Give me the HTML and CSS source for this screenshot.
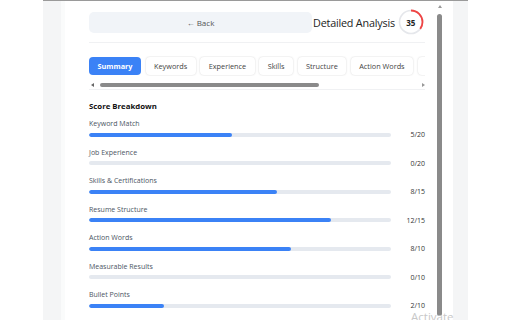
FILE: index.html
```
<!DOCTYPE html>
<html>
<head>
<meta charset="utf-8">
<link rel="stylesheet" href="styles.css">
</head>
<body>
<div class="frame">
  <div class="gutter"></div>
  <div class="gutter-light"></div>
  <div class="main">
    <div class="content">
      <div class="header">
        <div class="back">← Back</div>
        <div class="title">Detailed Analysis</div>
        <div class="score">
          <svg width="26" height="26" viewBox="0 0 26 26">
            <circle cx="13" cy="13" r="11.5" fill="none" stroke="#e5e7eb" stroke-width="1.6"/>
            <circle cx="13" cy="13" r="11.5" fill="none" stroke="#ef4444" stroke-width="1.8" stroke-dasharray="25.3 100" transform="rotate(-90 13 13)"/>
          </svg>
          <span class="score-num">35</span>
        </div>
      </div>
      <div class="tabs-wrap">
        <div class="tabs">
          <div class="tab active">Summary</div>
          <div class="tab">Keywords</div>
          <div class="tab">Experience</div>
          <div class="tab">Skills</div>
          <div class="tab">Structure</div>
          <div class="tab">Action Words</div>
          <div class="tab tab-more"></div>
        </div>
        <div class="hscroll">
          <span class="arrow-l"></span>
          <div class="htrack"><div class="hthumb"></div></div>
          <span class="arrow-r"></span>
        </div>
      </div>
      <div class="section-title">Score Breakdown</div>
      <div class="rows">
        <div class="row"><div class="label">Keyword Match</div><div class="line"><div class="bar"><div class="fill" style="width:47.4%"></div></div><div class="val">5/20</div></div></div>
        <div class="row"><div class="label">Job Experience</div><div class="line"><div class="bar"><div class="fill" style="width:0%"></div></div><div class="val">0/20</div></div></div>
        <div class="row"><div class="label">Skills &amp; Certifications</div><div class="line"><div class="bar"><div class="fill" style="width:62.3%"></div></div><div class="val">8/15</div></div></div>
        <div class="row"><div class="label">Resume Structure</div><div class="line"><div class="bar"><div class="fill" style="width:80.1%"></div></div><div class="val">12/15</div></div></div>
        <div class="row"><div class="label">Action Words</div><div class="line"><div class="bar"><div class="fill" style="width:66.9%"></div></div><div class="val">8/10</div></div></div>
        <div class="row"><div class="label">Measurable Results</div><div class="line"><div class="bar"><div class="fill" style="width:0%"></div></div><div class="val">0/10</div></div></div>
        <div class="row"><div class="label">Bullet Points</div><div class="line"><div class="bar"><div class="fill" style="width:24.8%"></div></div><div class="val">2/10</div></div></div>
      </div>
    </div>
    <div class="vscroll">
      <span class="arrow-u"></span>
      <div class="vthumb"></div>
    </div>
  </div>
  <div class="gutter-r"></div>
</div>
<div class="watermark"><span>Activate Windows</span></div>
</body>
</html>
```
FILE: styles.css
```
html, body {
  margin: 0;
  padding: 0;
}
body {
  width: 512px;
  height: 320px;
  overflow: hidden;
  background: #ffffff;
  font-family: "Open Sans", "Noto Sans", sans-serif;
  color: #333;
  position: relative;
}
.frame {
  margin-left: 43px;
  width: 425px;
  height: 320px;
  border-top: 1px solid #9a9a9a;
  box-sizing: border-box;
  display: flex;
  background: #f6f7f8;
}
.gutter { width: 18px; background: #f4f5f6; }
.gutter-light { width: 4px; background: #fafbfb; }
.main {
  width: 388px;
  background: #ffffff;
  display: flex;
}
.gutter-r { width: 15px; background: #f4f5f6; }
.content {
  margin-left: 24px;
  width: 336px;
  display: flex;
  flex-direction: column;
}
.header {
  display: flex;
  align-items: center;
  padding-top: 8px;
  padding-bottom: 7px;
  border-bottom: 1px solid #f0f1f3;
}
.back {
  width: 223px;
  height: 21px;
  border-radius: 5px;
  background: #f1f4f8;
  font-size: 8px;
  color: #555;
  display: flex;
  align-items: center;
  justify-content: center;
}
.title {
  margin-left: 1px;
  font-size: 10.8px;
  color: #222;
  letter-spacing: -0.2px;
  white-space: nowrap;
}
.score {
  margin-left: 3px;
  width: 26px;
  height: 26px;
  position: relative;
  display: flex;
  align-items: center;
  justify-content: center;
}
.score svg { position: absolute; left: 0; top: 0; }
.score-num {
  font-size: 8px;
  font-weight: 700;
  color: #222;
}
.tabs-wrap {
  padding-top: 13px;
  border-bottom: 1px solid #f0f1f3;
  padding-bottom: 1px;
}
.tabs {
  display: flex;
  gap: 4.5px;
  overflow: hidden;
  width: 336px;
  padding: 1px 0;
}
.tab {
  flex: none;
  height: 18px;
  padding: 0 8.5px;
  border-radius: 4px;
  background: #fff;
  box-shadow: 0 0 2px rgba(0,0,0,0.18);
  font-size: 7.3px;
  color: #444;
  display: flex;
  align-items: center;
}
.tab.active {
  background: #3b82f6;
  color: #fff;
  font-weight: 700;
  padding: 0 8.5px;
  box-shadow: none;
}
.tab-more { width: 30px; }
.hscroll {
  display: flex;
  align-items: center;
  height: 7px;
  margin-top: 5px;
}
.arrow-l {
  width: 0; height: 0;
  border-top: 2px solid transparent;
  border-bottom: 2px solid transparent;
  border-right: 3px solid #666;
  margin-left: 2px;
}
.arrow-r {
  width: 0; height: 0;
  border-top: 2px solid transparent;
  border-bottom: 2px solid transparent;
  border-left: 3px solid #999;
  margin-left: 3px;
}
.htrack {
  flex: 1;
  margin-left: 6px;
}
.hthumb {
  width: 219px;
  height: 4px;
  border-radius: 2px;
  background: #8a8a8a;
}
.section-title {
  margin-top: 11px;
  font-size: 7.8px;
  font-weight: 700;
  color: #111;
}
.rows {
  margin-top: 8px;
  display: flex;
  flex-direction: column;
}
.row {
  height: 28.5px;
}
.label {
  font-size: 7px;
  color: #4b5563;
  line-height: 10px;
}
.line {
  display: flex;
  align-items: center;
  margin-top: 1px;
}
.bar {
  width: 302px;
  height: 4px;
  border-radius: 2px;
  background: #e5e9ef;
  overflow: hidden;
}
.fill {
  height: 4px;
  background: #3b82f6;
  border-radius: 2px;
}
.val {
  flex: 1;
  text-align: right;
  font-size: 7px;
  color: #333;
}
.vscroll {
  margin-left: 12px;
  width: 5px;
  display: flex;
  flex-direction: column;
  align-items: center;
}
.arrow-u {
  margin-top: 4px;
  width: 0; height: 0;
  border-left: 2px solid transparent;
  border-right: 2px solid transparent;
  border-bottom: 3px solid #999;
}
.vthumb {
  margin-top: 6px;
  width: 5px;
  height: 302px;
  border-radius: 3px;
  background: #8a8a8a;
}
.watermark {
  position: absolute;
  left: 411px;
  top: 310px;
  width: 45px;
  height: 10px;
  overflow: hidden;
  font-size: 11.5px;
  line-height: 14px;
  color: #c8c8c8;
  white-space: nowrap;
  font-family: "Open Sans", sans-serif;
}
```
